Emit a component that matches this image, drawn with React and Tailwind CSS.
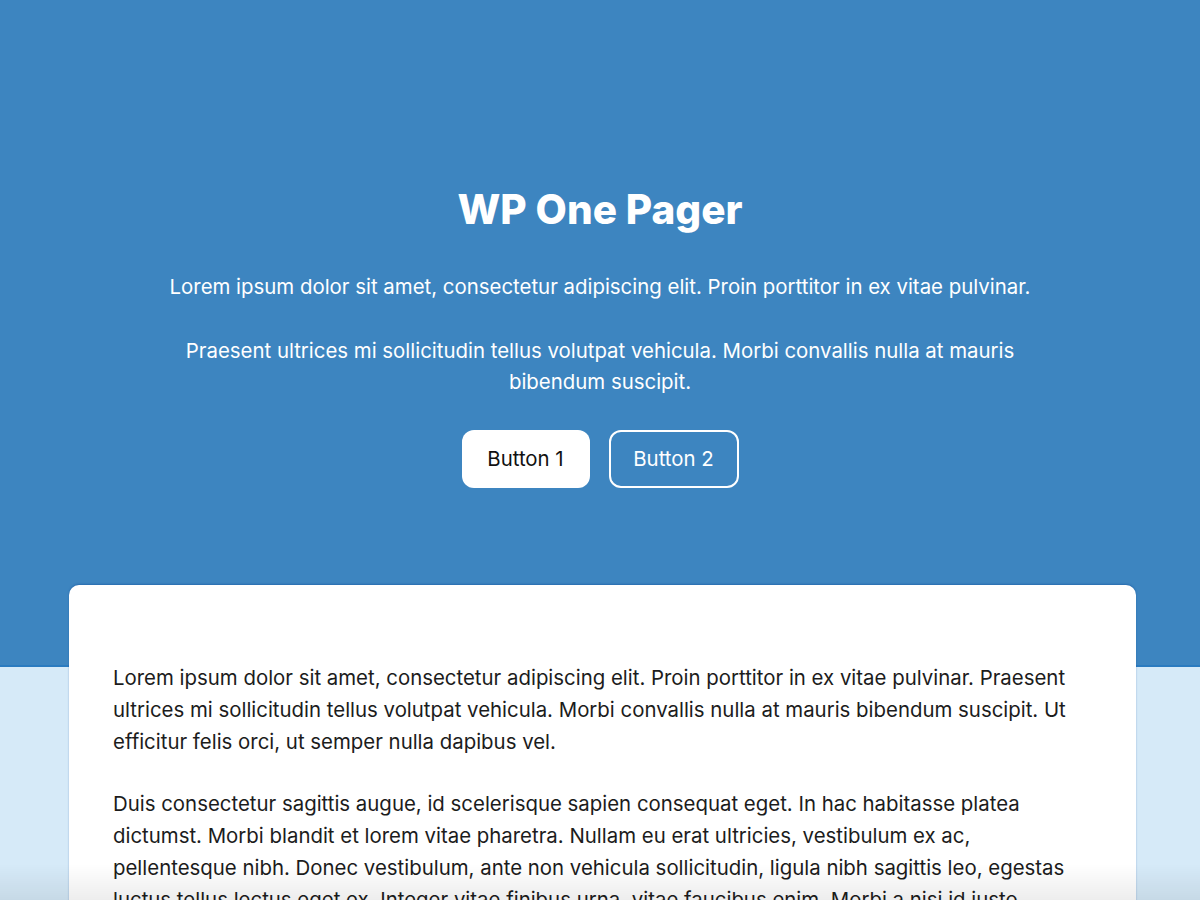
const body = [
    'Lorem ipsum dolor sit amet, consectetur adipiscing elit. Proin porttitor in ex vitae pulvinar. Praesent ultrices mi sollicitudin tellus volutpat vehicula. Morbi convallis nulla at mauris bibendum suscipit. Ut efficitur felis orci, ut semper nulla dapibus vel.',
    'Duis consectetur sagittis augue, id scelerisque sapien consequat eget. In hac habitasse platea dictumst. Morbi blandit et lorem vitae pharetra. Nullam eu erat ultricies, vestibulum ex ac, pellentesque nibh. Donec vestibulum, ante non vehicula sollicitudin, ligula nibh sagittis leo, egestas luctus tellus lectus eget ex. Integer vitae finibus urna, vitae faucibus enim. Morbi a nisi id justo tincidunt luctus. Aliquam erat volutpat.',
    'Vivamus sed nisl at magna dictum tempus. Curabitur non ligula ac lorem vulputate lacinia. Sed ut risus id eros elementum consequat.',
];

const App = () => {
    return (
        <div className="min-h-screen bg-[#d6eaf8] font-['Inter',sans-serif]">
            {/* Hero */}
            <header className="bg-[#3d85c0] border-b-2 border-[#2a7bc0] pt-[186px] pb-[177px] text-white text-center">
                <div className="max-w-[900px] mx-auto">
                    <h1 className="text-[40.5px] leading-[48px] font-extrabold">WP One Pager</h1>
                    <p className="mt-[37px] text-[20.4px] leading-[32px]">
                        Lorem ipsum dolor sit amet, consectetur adipiscing elit. Proin porttitor in ex vitae pulvinar.
                    </p>
                    <p className="mt-[32px] text-[20.4px] leading-[31px] max-w-[860px] mx-auto">
                        Praesent ultrices mi sollicitudin tellus volutpat vehicula. Morbi convallis nulla at mauris bibendum suscipit.
                    </p>
                    <div className="mt-[33px] flex justify-center gap-[19px]">
                        <button className="h-[58px] w-[128px] rounded-[12px] bg-white text-[#111] text-[20.4px]">
                            Button 1
                        </button>
                        <button className="h-[58px] w-[130px] rounded-[12px] border-2 border-white text-white text-[20.4px]">
                            Button 2
                        </button>
                    </div>
                </div>
            </header>

            {/* Content card */}
            <main className="pl-[69px] pr-[64px] -mt-[82px]">
                <div className="bg-white rounded-t-[10px] shadow-[0_-1px_2px_rgba(0,60,140,0.35)] px-[44px] pt-[77px] pb-16 text-[#1c1c1c] text-[20.4px] leading-[32px]">
                    {body.map((text, i) => (
                        <p key={i} className={i > 0 ? 'mt-[30px]' : ''}>{text}</p>
                    ))}
                </div>
            </main>

            {/* bottom fade */}
            <div className="fixed left-0 right-0 bottom-0 h-[36px] pointer-events-none bg-gradient-to-b from-transparent to-[rgba(0,0,0,0.07)]" />
        </div>
    );
};

export default App;
